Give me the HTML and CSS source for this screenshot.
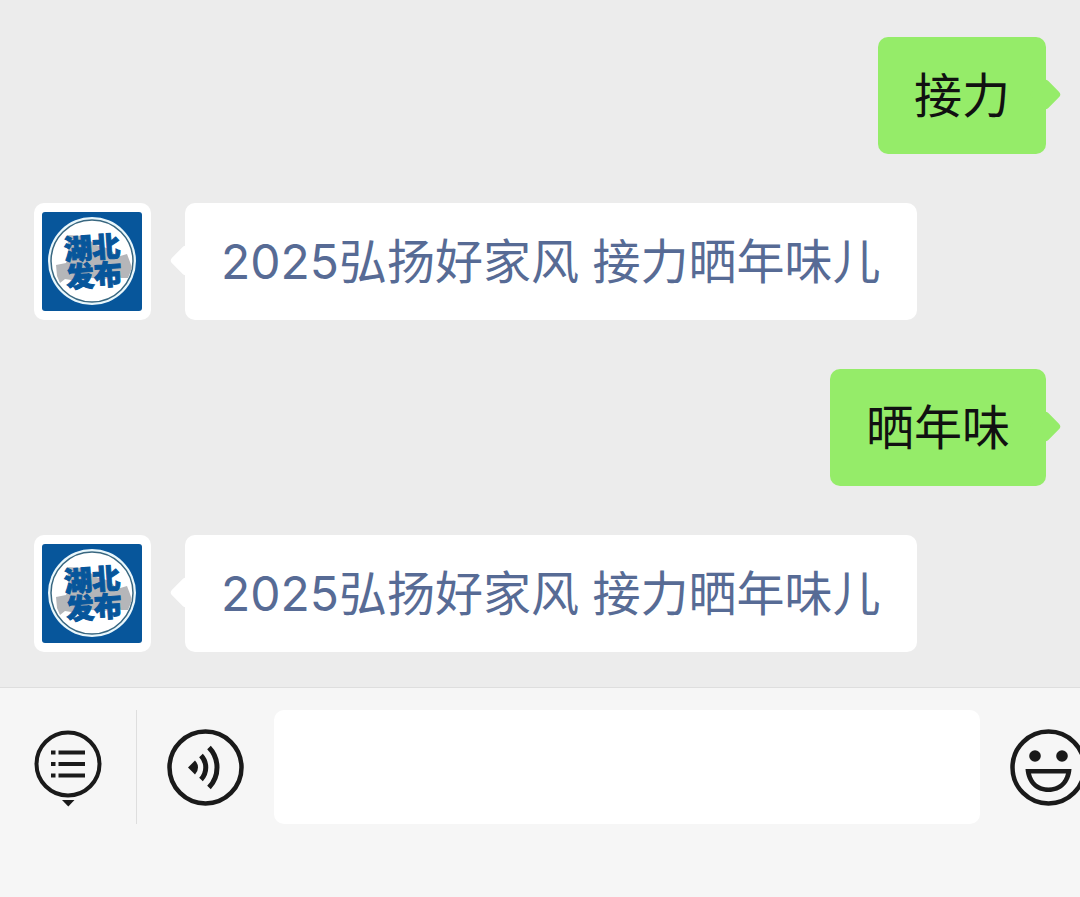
FILE: index.html
```
<!DOCTYPE html>
<html lang="zh-CN">
<head>
  <meta charset="UTF-8">
  <meta name="viewport" content="width=device-width, initial-scale=1.0">
  <title>湖北发布</title>
  <link rel="stylesheet" href="styles.css">
</head>
<body>
  <main class="chat">
    <div class="message sent">
      <p class="bubble">接力</p>
    </div>
    <div class="message">
      <svg class="avatar" viewBox="0 0 117 117" role="img" aria-label="湖北发布">
        <rect x="8" y="9" width="100" height="99" rx="3" fill="#07569b"/>
        <circle cx="58" cy="58" r="44" fill="#e9f7fc"/>
        <circle cx="58" cy="58" r="41" fill="#fff" stroke="#396780" stroke-width="1.5"/>
        <path d="M22 62l10-2 3-8-2-20 17 1 12 9 14 4 7 8 10-3 3 8 2 6-4 10-7 0-4-3-12 4-14-1-14 3-12-2-5 4-3-7z" fill="#b5b6b9"/>
        <g class="avatar-text" transform="rotate(-4 58 58)">
          <text x="31" y="55">湖北</text>
          <text x="31" y="83">发布</text>
        </g>
      </svg>
      <p class="bubble"><a href="#">2025弘扬好家风 接力晒年味儿</a></p>
    </div>
    <div class="message sent">
      <p class="bubble">晒年味</p>
    </div>
    <div class="message">
      <svg class="avatar" viewBox="0 0 117 117" role="img" aria-label="湖北发布">
        <rect x="8" y="9" width="100" height="99" rx="3" fill="#07569b"/>
        <circle cx="58" cy="58" r="44" fill="#e9f7fc"/>
        <circle cx="58" cy="58" r="41" fill="#fff" stroke="#396780" stroke-width="1.5"/>
        <path d="M22 62l10-2 3-8-2-20 17 1 12 9 14 4 7 8 10-3 3 8 2 6-4 10-7 0-4-3-12 4-14-1-14 3-12-2-5 4-3-7z" fill="#b5b6b9"/>
        <g class="avatar-text" transform="rotate(-4 58 58)">
          <text x="31" y="55">湖北</text>
          <text x="31" y="83">发布</text>
        </g>
      </svg>
      <p class="bubble"><a href="#">2025弘扬好家风 接力晒年味儿</a></p>
    </div>
  </main>

  <!-- Input bar -->
  <footer class="toolbar">
    <button class="menu-btn" type="button" aria-label="菜单">
      <svg width="68" height="78" viewBox="0 0 68 78">
        <circle cx="34" cy="34" r="31.5" fill="none" stroke="#1a1a1a" stroke-width="4"/>
        <path d="M17 22.5h4.5M24.5 22.5h26.5M17 34h4.5M24.5 34h26.5M17 45.5h4.5M24.5 45.5h26.5" stroke="#1a1a1a" stroke-width="4"/>
        <path d="M28 70h12.5l-6.2 6.5z" fill="#1a1a1a"/>
      </svg>
    </button>
    <button class="icon-btn" type="button" aria-label="语音">
      <svg width="77" height="77" viewBox="0 0 77 77">
        <circle cx="38.5" cy="38.5" r="36" fill="none" stroke="#1a1a1a" stroke-width="4.5"/>
        <path d="M21 38.5l7-7q3 3 3 7t-3 7z" fill="#1a1a1a"/>
        <path d="M34 26.500a17.500 17.500 0 0 1 0 24M42 18.500a29 29 0 0 1 0 40" fill="none" stroke="#1a1a1a" stroke-width="5"/>
      </svg>
    </button>
    <input class="text-input" type="text" aria-label="输入消息">
    <button class="icon-btn" type="button" aria-label="表情">
      <svg width="77" height="77" viewBox="0 0 77 77">
        <circle cx="38.5" cy="38.5" r="36" fill="none" stroke="#1a1a1a" stroke-width="4.5"/>
        <circle cx="25" cy="27" r="5.8" fill="#1a1a1a"/>
        <circle cx="52" cy="27" r="5.8" fill="#1a1a1a"/>
        <path d="M15.500 40h46c-1 14-10 23-23 23s-22-9-23-23zM21 44.500c2 8.500 8 14 17.500 14s15.500-5.500 17.500-14z" fill="#1a1a1a" fill-rule="evenodd"/>
      </svg>
    </button>
  </footer>
</body>
</html>
```
FILE: styles.css
```
* {
  margin: 0;
  padding: 0;
  box-sizing: border-box;
}

body {
  display: flex;
  flex-direction: column;
  min-height: 100vh;
  overflow-x: hidden;
  font-family: Inter, "Noto Sans CJK SC", sans-serif;
  background: #ececec;
  color: #111;
}

/* Messages */
.chat {
  display: flex;
  flex-direction: column;
  gap: 49px;
  padding: 37px 34px 35px;
}

.message {
  display: flex;
  align-items: flex-start;
  gap: 34px;
}

.message.sent {
  justify-content: flex-end;
}

.avatar {
  flex: none;
  width: 117px;
  height: 117px;
  border-radius: 10px;
  background: #fff;
}

.avatar-text {
  font-family: "Noto Sans CJK SC", sans-serif;
  font-size: 28px;
  font-weight: 900;
  fill: #07569b;
  stroke: #07569b;
  stroke-width: 1px;
}

.bubble {
  position: relative;
  padding: 29px 36px 28px;
  border-radius: 10px;
  background: #fff;
  font-size: 48px;
  line-height: 60px;
}

.bubble a {
  color: #576b95;
  text-decoration: none;
}

.bubble::before {
  content: '';
  position: absolute;
  top: 46px;
  left: -11px;
  width: 23px;
  height: 23px;
  border-radius: 4px;
  background: inherit;
  transform: rotate(45deg);
}

.sent .bubble {
  background: #95ec69;
}

.sent .bubble::before {
  left: auto;
  right: -11px;
}

/* Input bar */
.toolbar {
  flex: 1;
  display: flex;
  align-items: flex-start;
  gap: 30px;
  /* the last icon runs slightly past the screen edge */
  margin-right: -7px;
  padding-top: 22px;
  border-top: 1px solid #dedede;
  background: #f6f6f6;
}

.toolbar button {
  display: flex;
  align-items: center;
  flex: none;
  height: 114px;
  border: none;
  background: none;
  cursor: pointer;
}

.toolbar .menu-btn {
  padding: 4px 34px 0;
  border-right: 1px solid #dedede;
}

.text-input {
  flex: 1;
  min-width: 0;
  height: 114px;
  padding: 0 24px;
  border: none;
  border-radius: 10px;
  outline: none;
  background: #fff;
  font: inherit;
  font-size: 48px;
}
```
